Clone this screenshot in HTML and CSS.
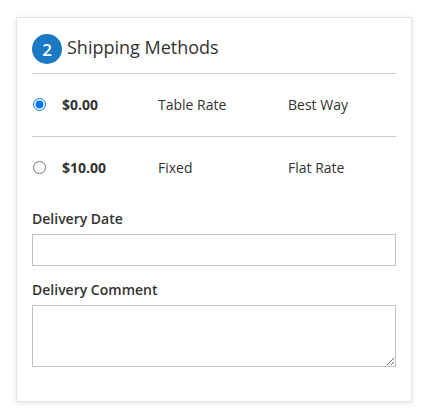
FILE: index.html
```html
<!DOCTYPE html>
<html lang="en">
<head>
  <meta charset="UTF-8" />
  <title>Shipping Methods</title>
  <link rel="stylesheet" href="styles.css">
</head>
<body>

<div class="card">
  <div class="step-title">
    <span class="step-num">2</span>
    <span class="step-text">Shipping Methods</span>
  </div>

  <div class="methods">
    <label class="method">
      <input type="radio" name="method" checked>
      <span class="price">$0.00</span>
      <span>Table Rate</span>
      <span>Best Way</span>
    </label>
    <label class="method">
      <input type="radio" name="method">
      <span class="price">$10.00</span>
      <span>Fixed</span>
      <span>Flat Rate</span>
    </label>
  </div>

  <div class="field">
    <label for="deliveryDate">Delivery Date</label>
    <input type="text" id="deliveryDate" class="input">
  </div>

  <div class="field">
    <label for="deliveryComment">Delivery Comment</label>
    <textarea id="deliveryComment" class="input textarea"></textarea>
  </div>
</div>

</body>
</html>
```

FILE: styles.css
```css
body {
  font-family: "Open Sans", sans-serif;
  font-size: 14px;
  color: #333;
  background-color: #fff;
  margin: 0;
  padding: 17px 16px;
}

.card {
  background: #fff;
  border: 1px solid #e3e3e3;
  box-shadow: 0 1px 5px rgba(0,0,0,0.12);
  padding: 14px 15px 34px;
}

.step-title {
  display: flex;
  align-items: center;
  gap: 5px;
  padding-bottom: 7px;
  border-bottom: 1px solid #ccc;
}

.step-num {
  width: 30px;
  height: 30px;
  border-radius: 50%;
  background-color: #1979c3;
  color: #fff;
  font-size: 17px;
  font-weight: 600;
  display: flex;
  align-items: center;
  justify-content: center;
}

.step-text {
  font-size: 18px;
  font-weight: 400;
  line-height: 30px;
  margin-bottom: 4px;
}

.method {
  display: grid;
  grid-template-columns: 30px 96px 130px auto;
  align-items: center;
  height: 61px;
  padding-bottom: 1px;
  border-bottom: 1px solid #ccc;
}

.method:last-child {
  border-bottom: none;
}

.method input {
  margin: 0 0 0 1px;
  width: 13px;
  height: 13px;
}

.price {
  font-weight: 700;
}

.field {
  margin-top: 10px;
}

.field label {
  display: block;
  font-weight: 600;
  line-height: 20px;
  margin-bottom: 5px;
}

.input {
  display: block;
  box-sizing: border-box;
  width: 100%;
  height: 32px;
  border: 1px solid #c2c2c2;
  margin: 0;
  font-family: inherit;
  font-size: 14px;
}

.field + .field {
  margin-top: 14px;
}

.textarea {
  height: 62px;
  resize: vertical;
}
```
